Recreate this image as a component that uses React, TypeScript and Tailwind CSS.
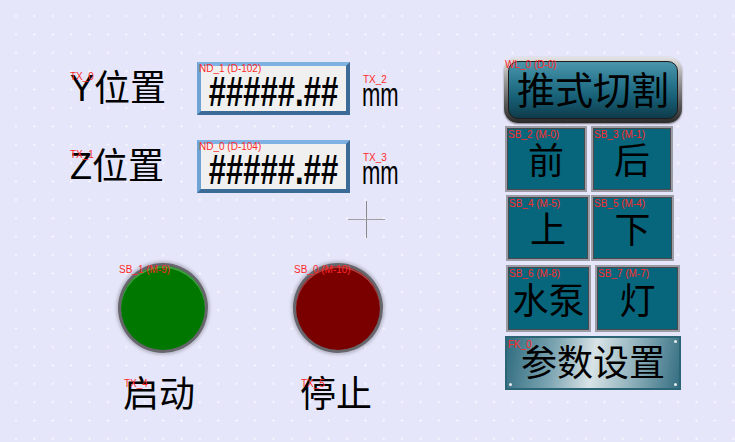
import React from "react";

// HMI 画面：位置显示 + 启停按钮 + 右侧功能按钮
const FONT = { fontFamily: '"Liberation Sans", "Noto Sans CJK SC", sans-serif' };

function Tag({ text, className = "" }: { text: string; className?: string }) {
  return (
    <span className={`absolute text-[10px] leading-none text-[#ff2a2a] whitespace-nowrap ${className}`}>
      {text}
    </span>
  );
}

function PosRow({ label, tag, nd, tx }: { label: string; tag: string; nd: string; tx: string }) {
  return (
    <div className="flex items-start">
      <div className="relative w-[127px] mt-[7px] h-[40px] text-[36px] leading-[40px] text-black">
        {label}
        <Tag text={tag} className="left-0 top-[3px]" />
      </div>
      <div className="relative w-[153px] h-[53px] border-[4px] border-t-[#7fb2e2] border-l-[#6fa3d6] border-r-[#3d6b98] border-b-[#3d6b98] bg-[#f0f0f0] flex items-center justify-center">
        <span className="text-[31px] font-bold leading-none text-black scale-y-[1.35] mt-[6px]">#####.##</span>
        <Tag text={nd} className="-left-[2px] -top-[2px]" />
      </div>
      <div className="relative ml-[12px] mt-[16px]">
        <span className="block text-[22px] leading-none text-black scale-y-[1.5] mt-[6px]">mm</span>
        <Tag text={tx} className="left-[1px] -top-[3px]" />
      </div>
    </div>
  );
}

function RoundButton({ tag, color, hi }: { tag: string; color: string; hi: string }) {
  return (
    <div className="relative w-[90px] h-[90px] rounded-full bg-[#66666c] p-[3px] shadow-[0_0_3px_2px_rgba(120,120,135,0.4)]">
      <div className={`w-full h-full rounded-full ${color} ${hi}`} />
      <Tag text={tag} className="left-[1px] top-[2px]" />
    </div>
  );
}

function SqButton({ text, tag, w, h = "h-[66px]" }: { text: string; tag: string; w: string; h?: string }) {
  return (
    <div className={`relative ${w} ${h} border-2 border-[#9c9ca6] bg-[#07667c] shadow-[inset_0_0_0_1px_#4a4a4e] flex items-center justify-center`}>
      <span className="text-[36px] leading-none text-black mt-[6px]">{text}</span>
      <Tag text={tag} className="left-[1px] top-[2px]" />
    </div>
  );
}

export default function App() {
  return (
    <div
      style={FONT}
      className="relative w-[735px] h-[442px] overflow-hidden flex bg-[#e6e6fa] bg-[radial-gradient(circle,#f8f8ff_0.9px,transparent_1.3px)] bg-size-[18.4px_18.4px] bg-position-[6.8px_6.8px]"
    >
      {/* 左侧 */}
      <div className="w-[504px] shrink-0 pl-[70px] pt-[62px] flex flex-col">
        <PosRow label="Y位置" tag="TX_0" nd="ND_1 (D-102)" tx="TX_2" />
        <div className="mt-[25px]">
          <PosRow label="Z位置" tag="TX_1" nd="ND_0 (D-104)" tx="TX_3" />
        </div>

        <div className="flex mt-[70px] ml-[48px] gap-[85px]">
          <RoundButton tag="SB_1 (M-9)" color="bg-[#007800]" hi="shadow-[inset_0_2px_0_#3fa03f]" />
          <RoundButton tag="SB_0 (M-10)" color="bg-[#7a0000]" hi="shadow-[inset_0_2px_0_#a84040]" />
        </div>

        <div className="flex mt-[24px] text-[36px] leading-[36px] text-black">
          <div className="relative ml-[53px] w-[177px]">
            启动
            <Tag text="TX_4" className="left-[1px] top-[2px]" />
          </div>
          <div className="relative">
            停止
            <Tag text="TX_5" className="left-[1px] top-[2px]" />
          </div>
        </div>
      </div>

      {/* 十字光标 */}
      <div className="absolute left-[348px] top-[201px] w-[37px] h-[37px]">
        <div className="absolute left-[18px] top-0 w-px h-full bg-[#8a8a8a]" />
        <div className="absolute left-0 top-[18px] h-px w-full bg-[#a0a0a0]" />
      </div>

      {/* 右侧按钮区 */}
      <div className="w-[178px] shrink-0 pt-[57px] flex flex-col">
        <div className="relative h-[66px] rounded-[14px] p-[4px] bg-[linear-gradient(180deg,#e4e4e4_0%,#9a9a9a_35%,#5a5a5a_70%,#2a2a2a_100%)] shadow-[0_1px_2px_rgba(0,0,0,0.5)]">
          <div className="h-full rounded-[10px] border border-[#1d1d1d] bg-[linear-gradient(180deg,#4b95ab_0%,#2a7890_35%,#165e74_65%,#0f3b4b_100%)] flex items-center justify-center">
            <span className="text-[38px] leading-none text-black mt-[2px]">推式切割</span>
          </div>
          <Tag text="WL_0 (D-0)" className="left-[1px] top-[3px]" />
        </div>

        <div className="flex mt-[3px] ml-[1px] gap-[4px]">
          <SqButton text="前" tag="SB_2 (M-0)" w="w-[82px]" />
          <SqButton text="后" tag="SB_3 (M-1)" w="w-[82px]" />
        </div>
        <div className="flex mt-[3px] ml-[2px] gap-px">
          <SqButton text="上" tag="SB_4 (M-5)" w="w-[84px]" />
          <SqButton text="下" tag="SB_5 (M-4)" w="w-[83px]" />
        </div>
        <div className="flex mt-[4px] ml-[2px] gap-[4px]">
          <SqButton text="水泵" tag="SB_6 (M-8)" w="w-[85px]" h="h-[67px]" />
          <SqButton text="灯" tag="SB_7 (M-7)" w="w-[85px]" h="h-[67px]" />
        </div>

        <div className="relative mt-[4px] ml-[1px] w-[176px] h-[54px] border-2 border-[#2c6676] bg-[linear-gradient(100deg,#2f6c7f_0%,#7ea6b3_28%,#d8e3e6_50%,#93b4be_72%,#356f82_100%)] flex items-center justify-center">
          <span className="text-[36px] leading-none text-black mt-[2px]">参数设置</span>
          <Tag text="FK_0" className="left-[1px] top-[2px]" />
          <span className="absolute left-[2px] bottom-[2px] w-[3px] h-[3px] rounded-full bg-[#e8eef0]" />
          <span className="absolute right-[2px] top-[2px] w-[3px] h-[3px] rounded-full bg-[#e8eef0]" />
          <span className="absolute right-[2px] bottom-[2px] w-[3px] h-[3px] rounded-full bg-[#e8eef0]" />
        </div>
      </div>
    </div>
  );
}
